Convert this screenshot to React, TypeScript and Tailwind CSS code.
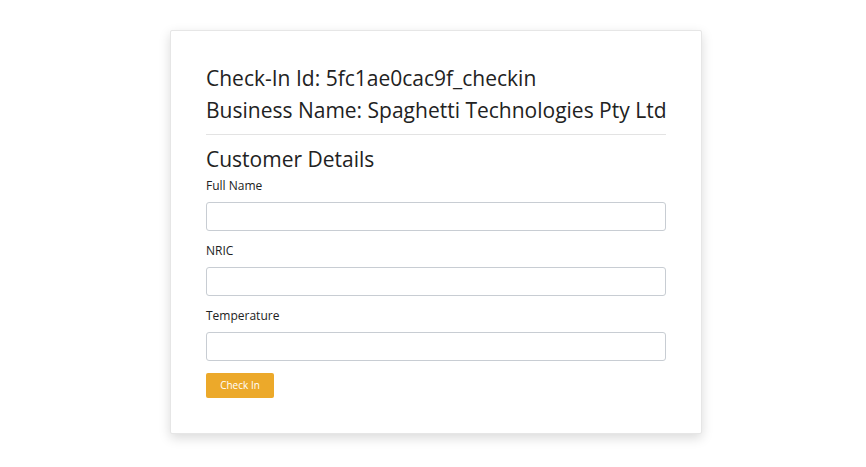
const Field = ({ label }: { label: string }) => (
    <div className="flex flex-col">
        <label className="text-[12px] leading-[18px] text-[#222] mb-[7px]">{label}</label>
        <input className="h-[29px] w-full rounded-[3px] border border-[#c8cdd3] bg-white px-2 text-[13px] outline-none" />
    </div>
);

export default function App() {
    return (
        <div className="min-h-[467px] w-full bg-white pt-[30px] font-['Open_Sans',sans-serif]">
            <div className="ml-[170px] w-[532px] rounded-[2px] border border-[#e6e6e6] bg-white px-[35px] pt-[31px] pb-[35px] shadow-[0_4px_12px_rgba(0,0,0,0.15)]">
                <div className="whitespace-nowrap text-[21px] leading-[32px] text-[#222]">
                    <div>Check-In Id: 5fc1ae0cac9f_checkin</div>
                    <div>Business Name: Spaghetti Technologies Pty Ltd</div>
                </div>
                <div className="mt-[8px] border-t border-[#e3e3e3]" />
                <h2 className="mt-[11px] text-[21px] leading-[26px] text-[#222]">Customer Details</h2>
                <div className="mt-[5px] flex flex-col gap-[11px]">
                    <Field label="Full Name" />
                    <Field label="NRIC" />
                    <Field label="Temperature" />
                </div>
                <button className="mt-[12px] h-[25px] w-[68px] rounded-[2px] bg-[#eca92a] text-[10px] text-white">
                    Check In
                </button>
            </div>
        </div>
    );
}
